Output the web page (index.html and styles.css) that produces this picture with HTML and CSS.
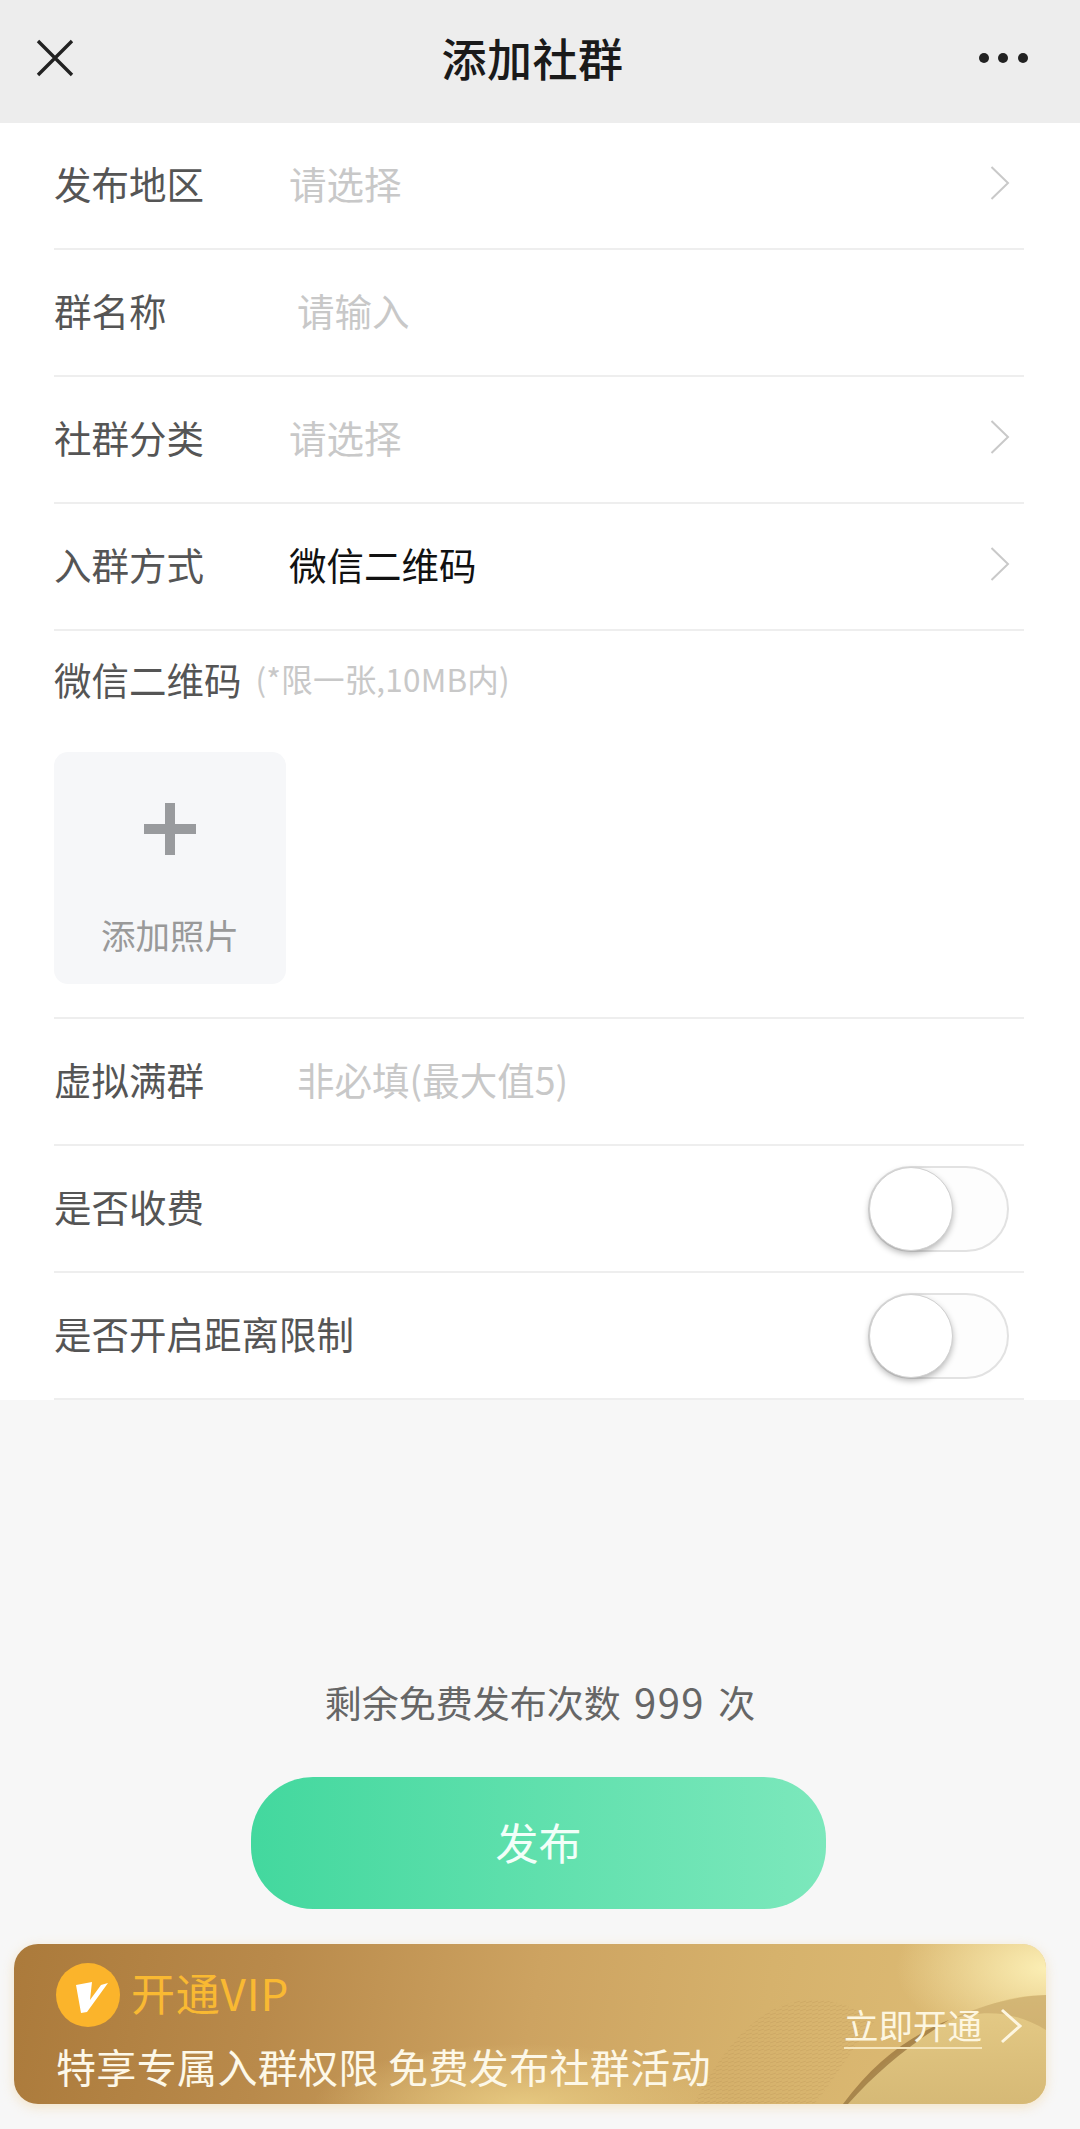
FILE: index.html
```html
<!DOCTYPE html>
<html lang="zh-CN">
<head>
    <meta charset="UTF-8">
    <meta name="viewport" content="width=device-width, initial-scale=1.0">
    <title>添加社群</title>
    <link rel="stylesheet" href="styles.css">
</head>
<body>
    <header class="topbar">
        <svg class="close-icon" width="38" height="38" viewBox="0 0 38 38"><path d="M2 2 L36 36 M36 2 L2 36" stroke="#222" stroke-width="3.4" fill="none"/></svg>
        <h1 class="title">添加社群</h1>
        <div class="more-icon"><i></i><i></i><i></i></div>
    </header>

    <main class="form">
        <div class="row">
            <span class="label">发布地区</span>
            <span class="value placeholder">请选择</span>
            <svg class="chevron" width="20" height="34" viewBox="0 0 20 34"><path d="M1.5 1 L18 17 L1.5 33" stroke="#c9c9c9" stroke-width="2" fill="none"/></svg>
        </div>
        <div class="row">
            <span class="label">群名称</span>
            <span class="value placeholder input-value">请输入</span>
        </div>
        <div class="row">
            <span class="label">社群分类</span>
            <span class="value placeholder">请选择</span>
            <svg class="chevron" width="20" height="34" viewBox="0 0 20 34"><path d="M1.5 1 L18 17 L1.5 33" stroke="#c9c9c9" stroke-width="2" fill="none"/></svg>
        </div>
        <div class="row">
            <span class="label">入群方式</span>
            <span class="value">微信二维码</span>
            <svg class="chevron" width="20" height="34" viewBox="0 0 20 34"><path d="M1.5 1 L18 17 L1.5 33" stroke="#c9c9c9" stroke-width="2" fill="none"/></svg>
        </div>
        <div class="upload-row">
            <div class="upload-head">
                <span class="upload-label">微信二维码</span>
                <span class="upload-hint">(*限一张,10MB内)</span>
            </div>
            <div class="upload-card">
                <div class="plus"></div>
                <span class="upload-text">添加照片</span>
            </div>
        </div>
        <div class="row">
            <span class="label">虚拟满群</span>
            <span class="value placeholder input-value">非必填(最大值5)</span>
        </div>
        <div class="row">
            <span class="label">是否收费</span>
            <div class="switch"><div class="knob"></div></div>
        </div>
        <div class="row">
            <span class="label">是否开启距离限制</span>
            <div class="switch"><div class="knob"></div></div>
        </div>
    </main>

    <section class="publish">
        <p class="remain">剩余免费发布次数 <span class="count">999</span> 次</p>
        <button class="publish-btn" type="button"><span>发布</span></button>
    </section>

    <section class="vip">
        <svg class="vip-cloth" width="1032" height="160" viewBox="0 0 1032 160">
            <defs>
                <radialGradient id="glow" cx="1" cy="0.15" r="0.5">
                    <stop offset="0" stop-color="#fbeeb4"/>
                    <stop offset="1" stop-color="#fbeeb4" stop-opacity="0"/>
                </radialGradient>
                <radialGradient id="sheen" cx="0.5" cy="1" r="0.5">
                    <stop offset="0" stop-color="#e6c880"/>
                    <stop offset="1" stop-color="#e6c880" stop-opacity="0"/>
                </radialGradient>
                <linearGradient id="fold" x1="0" y1="0" x2="0" y2="1">
                    <stop offset="0" stop-color="#e6cc88"/>
                    <stop offset="0.6" stop-color="#dcc07c"/>
                    <stop offset="1" stop-color="#d6b976"/>
                </linearGradient>
                <pattern id="weave" width="6" height="4" patternUnits="userSpaceOnUse">
                    <path d="M0 3 L6 1" stroke="#a98148" stroke-width="1"/>
                </pattern>
            </defs>
            <rect x="300" y="40" width="420" height="120" fill="url(#sheen)"/>
            <rect x="732" y="0" width="300" height="160" fill="url(#glow)"/>
            <path d="M680 160 C705 110 740 62 790 56 C820 54 840 62 860 78 C840 100 822 135 800 160 Z" fill="url(#weave)" fill-opacity="0.2"/>
            <path d="M829 160 C870 112 920 82 970 63 C990 55 1010 51 1032 51 L1032 160 Z" fill="url(#fold)"/>
            <path d="M829 160 C860 118 895 92 935 76 C900 98 865 125 834 160 Z" fill="#8f6a35" fill-opacity="0.65"/>
            <path d="M935 76 C975 58 1005 52 1032 51 L1032 86 C1002 68 972 64 935 76 Z" fill="#b8955a" fill-opacity="0.4"/>
        </svg>
        <div class="vip-left">
            <div class="vip-head">
                <div class="vip-badge">
                    <svg width="64" height="64" viewBox="0 0 64 64"><circle cx="32" cy="32" r="32" fill="#fbb42b"/><path d="M20 22 L36 19 L34 37 L45 22 L52 20 L31 49 L25 50 Z" fill="#fff"/></svg>
                </div>
                <span class="vip-title">开通VIP</span>
            </div>
            <p class="vip-desc">特享专属入群权限 免费发布社群活动</p>
        </div>
        <div class="vip-right">
            <span class="vip-link">立即开通</span>
            <svg width="22" height="36" viewBox="0 0 22 36"><path d="M2 2 L20 18 L2 34" stroke="#fdf6e0" stroke-width="3" fill="none"/></svg>
        </div>
    </section>
</body>
</html>
```

FILE: styles.css
```css
* {
    box-sizing: border-box;
}
body {
    font-family: "Noto Sans CJK SC", "Noto Sans", sans-serif;
    background-color: #f7f7f7;
    width: 1080px;
    height: 2129px;
    margin: 0;
    overflow: hidden;
}
.topbar {
    height: 123px;
    padding: 0 50px 7px 36px;
    background-color: #ededed;
    display: flex;
    align-items: center;
    justify-content: space-between;
}
.title {
    margin: 0 0 0 12px;
    font-size: 45px;
    font-weight: 500;
    line-height: 60px;
    letter-spacing: 0.5px;
    color: #1a1a1a;
}
.more-icon {
    display: flex;
    gap: 9.5px;
    margin-right: 2px;
}
.more-icon i {
    width: 10px;
    height: 10px;
    border-radius: 50%;
    background-color: #222;
}
.form {
    height: 1277px;
    padding: 0 56px 0 54px;
    background-color: white;
}
.row {
    height: 127px;
    display: flex;
    align-items: center;
    border-bottom: 2px solid #eeeeee;
    font-size: 37.5px;
}
.label {
    width: 235px;
    flex-shrink: 0;
    padding-bottom: 6px;
    color: #555;
    white-space: nowrap;
}
.value {
    flex: 1;
    padding-bottom: 6px;
    font-size: 37.5px;
    color: #111;
}
.placeholder {
    color: #c8c8c8;
}
.input-value {
    padding-left: 8px;
}
.chevron {
    margin-right: 14px;
    margin-bottom: 6px;
}
.upload-row {
    height: 388px;
    border-bottom: 2px solid #eeeeee;
    padding-top: 20px;
}
.upload-head {
    display: flex;
    align-items: center;
    gap: 14px;
    height: 54px;
}
.upload-label {
    font-size: 37.5px;
    color: #555;
}
.upload-hint {
    font-size: 31.5px;
    letter-spacing: 0.2px;
    color: #c8c8c8;
}
.upload-card {
    width: 232px;
    height: 232px;
    margin-top: 47px;
    border-radius: 14px;
    background-color: #f6f7f9;
    display: flex;
    flex-direction: column;
    align-items: center;
    padding-top: 51px;
}
.plus {
    width: 52px;
    height: 52px;
    background:
        linear-gradient(#999b9e, #999b9e) center / 10px 52px no-repeat,
        linear-gradient(#999b9e, #999b9e) center / 52px 10px no-repeat;
}
.upload-text {
    margin-top: 57px;
    font-size: 34.5px;
    line-height: 44px;
    color: #999;
}
.switch {
    width: 141px;
    height: 86px;
    margin-left: auto;
    margin-right: 15px;
    border-radius: 43px;
    border: 2px solid #e2e2e2;
    background-color: #fdfdfd;
    display: flex;
    align-items: center;
}
.switch .knob {
    width: 84px;
    height: 84px;
    margin-left: -1px;
    border-radius: 50%;
    background-color: white;
    border: 1px solid #d0d0d0;
    box-shadow: 0 3px 6px rgba(0, 0, 0, 0.28);
}
.publish {
    display: flex;
    flex-direction: column;
    align-items: center;
    padding-top: 276px;
}
.remain {
    margin: 0;
    height: 50px;
    line-height: 50px;
    font-size: 37px;
    word-spacing: 5px;
    color: #666;
}
.count {
    font-size: 40px;
    letter-spacing: 1.5px;
}
.publish-btn {
    width: 575px;
    height: 132px;
    margin-top: 51px;
    margin-left: -3px;
    padding: 0 0 5px;
    border: none;
    border-radius: 62px;
    background: linear-gradient(90deg, #43d89e, #7ce8bc);
    color: #f2fff9;
    font-family: inherit;
    font-size: 43px;
}
.vip {
    position: relative;
    width: 1032px;
    height: 160px;
    margin: 35px 0 0 14px;
    border-radius: 24px;
    overflow: hidden;
    background: linear-gradient(100deg, #ab7a3b 0%, #b98a4b 25%, #cda361 50%, #d6b26c 72%, #e0bf78 100%);
    box-shadow: 0 3px 12px rgba(240, 205, 140, 0.45);
    display: flex;
    justify-content: space-between;
}
.vip-cloth {
    position: absolute;
    left: 0;
    top: 0;
}
.vip-left {
    position: relative;
    padding: 19px 0 0 42px;
}
.vip-head {
    display: flex;
    align-items: center;
    gap: 11px;
    height: 64px;
}
.vip-badge {
    width: 64px;
    height: 64px;
}
.vip-title {
    margin-top: -6px;
    font-size: 44px;
    line-height: 64px;
    letter-spacing: 0.8px;
    color: #f9b932;
}
.vip-desc {
    margin: 12px 0 0;
    font-size: 40px;
    line-height: 54px;
    letter-spacing: 0.35px;
    color: #fdf8e8;
    white-space: nowrap;
}
.vip-right {
    position: relative;
    display: flex;
    align-items: flex-start;
    gap: 18px;
    padding: 58px 24px 0 0;
}
.vip-link {
    font-size: 34.5px;
    line-height: 44px;
    height: 47px;
    color: #fdf6e0;
    border-bottom: 2px solid #f6e6bd;
}
.vip-right svg {
    margin-top: 6px;
}
```
